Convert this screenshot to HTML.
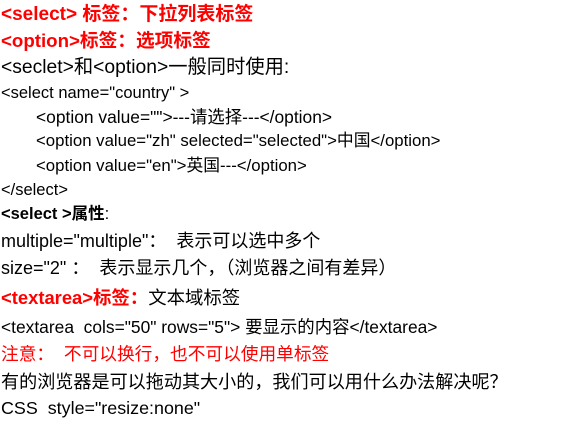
<!DOCTYPE html>
<html><head><meta charset="utf-8"><style>
body{margin:0;width:575px;height:431px;background:#fff;overflow:hidden;font-family:"Liberation Sans","Noto Sans CJK SC",sans-serif;color:#000}
div{position:absolute;left:1px;white-space:nowrap;height:24px;line-height:24px}
.r{color:#f00}.b{font-weight:bold}
</style></head><body>
<div class="r b" style="top:3px;font-size:19px">&lt;select&gt; 标签：下拉列表标签</div>
<div class="r b" style="top:29px;font-size:18.7px">&lt;option&gt;标签：选项标签</div>
<div style="top:56px;font-size:19.3px">&lt;seclet&gt;和&lt;option&gt;一般同时使用:</div>
<div style="top:81px;font-size:16.5px">&lt;select name="country" &gt;</div>
<div style="top:105px;font-size:17.4px;left:36px">&lt;option value=""&gt;---请选择---&lt;/option&gt;</div>
<div style="top:129px;font-size:16.8px;left:36px">&lt;option value="zh" selected="selected"&gt;中国&lt;/option&gt;</div>
<div style="top:154px;font-size:16.8px;left:36px">&lt;option value="en"&gt;英国---&lt;/option&gt;</div>
<div style="top:178px;font-size:16.5px">&lt;/select&gt;</div>
<div style="top:202px;font-size:16.5px"><b>&lt;select &gt;属性</b>:</div>
<div style="top:229px;font-size:18px">multiple="multiple"：&nbsp; 表示可以选中多个</div>
<div style="top:256px;font-size:18px">size="2" ：&nbsp; 表示显示几个，（浏览器之间有差异）</div>
<div style="top:286px;font-size:18.4px"><span class="r b">&lt;textarea&gt;标签：</span>文本域标签</div>
<div style="top:315px;font-size:17.4px">&lt;textarea&nbsp; cols="50" rows="5"&gt; 要显示的内容&lt;/textarea&gt;</div>
<div class="r" style="top:342px;font-size:17.7px">注意：&nbsp; 不可以换行，也不可以使用单标签</div>
<div style="top:370px;font-size:18.1px">有的浏览器是可以拖动其大小的，我们可以用什么办法解决呢？</div>
<div style="top:396px;font-size:17.9px">CSS&nbsp; style="resize:none"</div>
</body></html>
